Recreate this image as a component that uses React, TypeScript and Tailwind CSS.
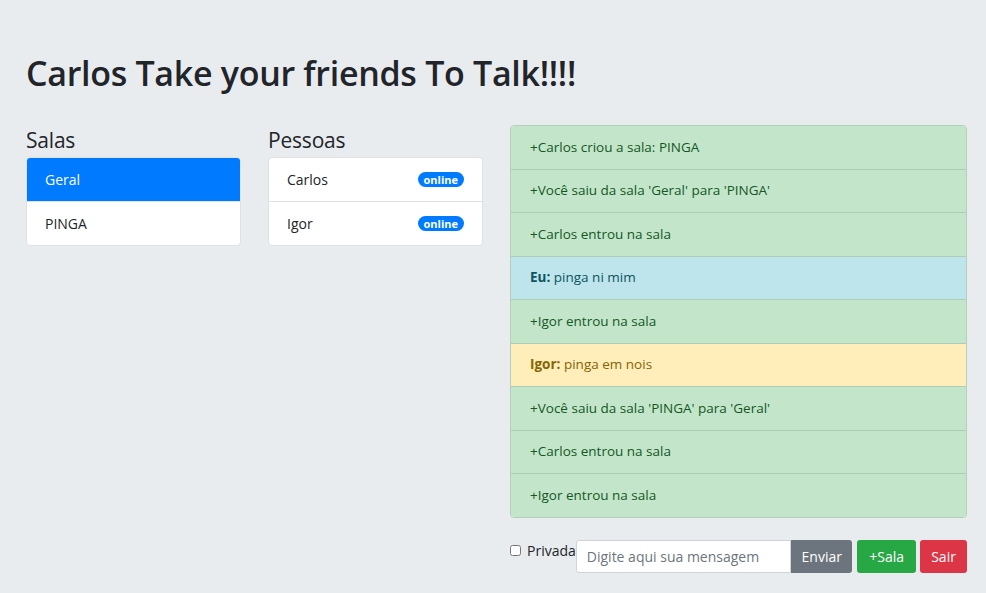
import React from 'react'

type Message = {
  kind: 'success' | 'info' | 'warning'
  author?: string
  text: string
}

const messages: Message[] = [
  { kind: 'success', text: '+Carlos criou a sala: PINGA' },
  { kind: 'success', text: "+Você saiu da sala 'Geral' para 'PINGA'" },
  { kind: 'success', text: '+Carlos entrou na sala' },
  { kind: 'info', author: 'Eu:', text: 'pinga ni mim' },
  { kind: 'success', text: '+Igor entrou na sala' },
  { kind: 'warning', author: 'Igor:', text: 'pinga em nois' },
  { kind: 'success', text: "+Você saiu da sala 'PINGA' para 'Geral'" },
  { kind: 'success', text: '+Carlos entrou na sala' },
  { kind: 'success', text: '+Igor entrou na sala' },
]

const kindClasses: Record<Message['kind'], string> = {
  success: 'bg-[#c3e6cb] text-[#155724]',
  info: 'bg-[#bee5eb] text-[#0c5460]',
  warning: 'bg-[#ffeeba] text-[#856404]',
}

const rooms = ['Geral', 'PINGA']
const people = ['Carlos', 'Igor']

export default function App() {
  return (
    <div
      className="min-h-screen bg-[#e9ecef] pl-[26px] pr-[19px] pt-[52px] text-[#212529]"
      style={{ fontFamily: '"Open Sans", "Noto Sans", sans-serif' }}
    >
      <h1 className="mb-[30px] text-[34px] font-semibold leading-[43px] tracking-[-0.3px]">
        Carlos Take your friends To Talk!!!!
      </h1>

      <div className="grid grid-cols-[215px_215px_457px] gap-x-[27px]">
        <section>
          <h3 className="mb-[2px] h-[30px] text-[21px] font-medium leading-[30px] tracking-[-0.2px]">
            Salas
          </h3>
          <ul className="overflow-hidden rounded-[4px] border border-[#dfe1e3] bg-white text-[14px] divide-y divide-[#dfe1e3]">
            {rooms.map((room, index) => (
              <li
                key={room}
                className={
                  index === 0
                    ? 'bg-[#007bff] px-[18px] py-[10.5px] leading-[22px] text-white'
                    : 'px-[18px] py-[10.5px] leading-[22px]'
                }
              >
                {room}
              </li>
            ))}
          </ul>
        </section>

        <section>
          <h3 className="mb-[2px] h-[30px] text-[21px] font-medium leading-[30px] tracking-[-0.2px]">
            Pessoas
          </h3>
          <ul className="rounded-[4px] border border-[#dfe1e3] bg-white text-[14px] divide-y divide-[#dfe1e3]">
            {people.map(person => (
              <li
                key={person}
                className="flex items-center justify-between px-[18px] py-[10.5px] leading-[22px]"
              >
                {person}
                <span className="rounded-full bg-[#007bff] px-[6px] text-[11px] font-bold leading-[15px] text-white">
                  online
                </span>
              </li>
            ))}
          </ul>
        </section>

        <section className="flex flex-col">
          <ul className="overflow-hidden rounded-[4px] border border-[#b5cfbb] text-[13.5px] divide-y divide-[#afccb6]">
            {messages.map((msg, index) => (
              <li
                key={`msg-${index}`}
                className={`px-[19px] py-[10.5px] leading-[21.5px] ${kindClasses[msg.kind]}`}
              >
                {msg.author && <strong className="font-bold">{msg.author} </strong>}
                {msg.text}
              </li>
            ))}
          </ul>

          <div className="mt-[22px] flex items-start text-[14px]">
            <label className="flex items-start leading-[22px]">
              <input type="checkbox" className="mr-[6px] mt-[5px] h-[11px] w-[11px]" />
              Privada
            </label>
            <input
              placeholder="Digite aqui sua mensagem"
              className="h-[33px] w-[216px] rounded-l-[3px] border border-[#ced4da] bg-white px-[10px] text-[14px] outline-none placeholder:text-[#6c757d]"
            />
            <button className="h-[33px] w-[61px] rounded-r-[3px] bg-[#6c757d] text-white">
              Enviar
            </button>
            <button className="ml-[5px] h-[33px] w-[59px] rounded-[3px] bg-[#28a745] text-white">
              +Sala
            </button>
            <button className="ml-[4px] h-[33px] w-[47px] rounded-[3px] bg-[#dc3545] text-white">
              Sair
            </button>
          </div>
        </section>
      </div>
    </div>
  )
}
